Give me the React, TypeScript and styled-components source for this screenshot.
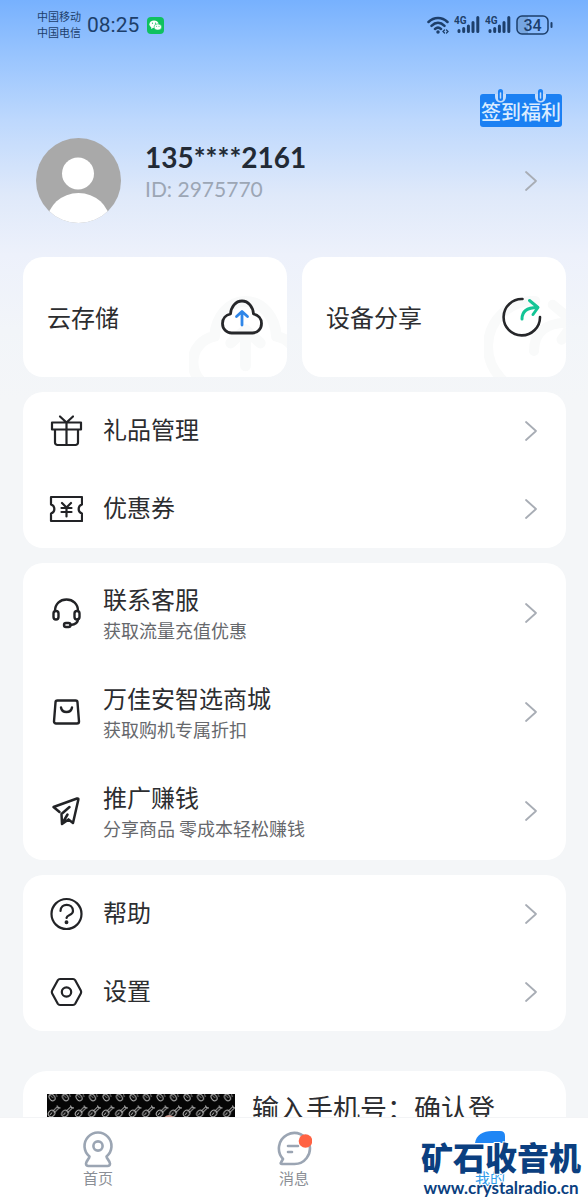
import React from 'react';
import styled, { createGlobalStyle } from 'styled-components';

const GlobalStyle = createGlobalStyle`
  * { box-sizing: border-box; }
  body { margin: 0; background: #f4f6f8; }
  button { border: 0; padding: 0; background: none; font: inherit; color: inherit; text-align: left; cursor: pointer; }
  a { color: inherit; text-decoration: none; }
  svg { display: block; flex: none; }
`;

const Screen = styled.div`
  height: 100vh;
  display: flex;
  flex-direction: column;
  overflow: hidden;
  font-family: "Noto Sans CJK SC", sans-serif;
  color: #2c2d30;
  background: linear-gradient(180deg, #77b1fe 0, #98c4fe 55px, #bdd8fd 120px, #dfe9fa 195px, #edf1fb 255px, #f2f5f9 330px, #f4f6f8 400px);
`;

const StatusBar = styled.header`
  flex: none;
  display: flex;
  align-items: center;
  height: 50px;
  padding: 0 35px 0 37px;
  color: #1d3f6b;
`;

const Carriers = styled.div`
  padding-bottom: 2px;
  font-size: 11px;
  line-height: 16px;
`;

const Clock = styled.time`
  margin: 0 8px 0 6px;
  font: 21px/24px Roboto, sans-serif;
`;

const StatusIcons = styled.div`
  display: flex;
  align-items: center;
  gap: 5px;
  margin-left: auto;
`;

const Content = styled.main`
  flex: 1;
  min-height: 0;
  overflow: hidden;
  display: flex;
  flex-direction: column;
  gap: 15px;
  padding: 0 22px 0 23px;
`;

const Profile = styled.section`
  flex: none;
  display: flex;
  flex-direction: column;
  gap: 11px;
  padding-top: 44px;
  margin-bottom: 19px;
`;

const CheckIn = styled.button`
  position: relative;
  align-self: flex-end;
  margin-right: 4px;
  width: 82px;
  height: 33px;
  border-radius: 3px;
  background: #1b80f3;
  color: #d9ebff;
  font-size: 20px;
  font-weight: 500;
  line-height: 36px;
  text-align: center;
  white-space: nowrap;
`;

const Rings = styled.svg`
  position: absolute;
  left: 0;
  top: -5px;
`;

const UserRow = styled.button`
  display: flex;
  align-items: center;
  width: 100%;
  padding: 0 28px 0 13px;
`;

const UserText = styled.span`
  display: flex;
  flex-direction: column;
  flex: 1;
  margin: 0 0 18px 24px;
  font-family: Lato, sans-serif;
`;

const Phone = styled.span`
  color: #222a35;
  font-size: 28px;
  font-weight: 700;
  line-height: 34px;
`;

const UserId = styled.span`
  color: #9ca6b5;
  font-size: 21px;
  line-height: 30px;
`;

const Tiles = styled.section`
  flex: none;
  display: grid;
  grid-template-columns: 1fr 1fr;
  gap: 15px;
`;

const Tile = styled.button`
  position: relative;
  overflow: hidden;
  display: flex;
  align-items: center;
  justify-content: space-between;
  height: 120px;
  padding: 0 24px;
  border-radius: 20px;
  background: #fff;
  font-size: 24px;
  line-height: 32px;
`;

const Ghost = styled.span<{ $right: number }>`
  position: absolute;
  top: 39px;
  right: ${(p) => p.$right}px;
`;

const TileIcon = styled.span`
  position: relative;
`;

const Card = styled.ul`
  flex: none;
  list-style: none;
  margin: 0;
  padding: 0;
  border-radius: 20px;
  background: #fff;
`;

const Row = styled.button<{ $tall?: boolean }>`
  display: flex;
  align-items: center;
  gap: 20px;
  width: 100%;
  height: ${(p) => (p.$tall ? 99 : 78)}px;
  padding: 0 28px 0 26px;
`;

const RowText = styled.span`
  flex: 1;
  display: flex;
  flex-direction: column;
`;

const RowTitle = styled.span`
  padding-bottom: 4px;
  font-size: 24px;
  line-height: 30px;
`;

const RowNote = styled.span`
  color: #66686c;
  font-size: 18px;
  line-height: 24px;
`;

const Promo = styled.article`
  flex: none;
  display: flex;
  gap: 17px;
  margin-top: 25px;
  padding: 23px 24px;
  border-radius: 24px;
  background: #fff;
`;

const PromoText = styled.p`
  flex: 1;
  margin: 0;
  font-size: 27px;
  line-height: 28px;
`;

const TabBar = styled.nav`
  position: relative;
  flex: none;
  display: grid;
  grid-template-columns: repeat(3, 1fr);
  height: 83px;
  background: #fff;
  border-top: 1px solid #f3f4f6;
`;

const Tab = styled.a<{ $active?: boolean }>`
  display: flex;
  flex-direction: column;
  align-items: center;
  padding-top: 12px;
  color: ${(p) => (p.$active ? '#2e9bea' : '#8b8f96')};
  font-size: 15px;
  line-height: 20px;
`;

const SiteMark = styled.div`
  position: absolute;
  right: 7px;
  bottom: 1px;
  color: #0b3f80;
  text-align: center;
  white-space: nowrap;
  -webkit-text-stroke: 2px #fff;
  paint-order: stroke fill;
`;

const SiteName = styled.div`
  padding-bottom: 3px;
  font-size: 32px;
  font-weight: 900;
  line-height: 36px;
`;

const SiteUrl = styled.div`
  font: 700 17px/22px Lato, sans-serif;
`;

const Chevron = () => (
  <svg width="14" height="22" viewBox="0 0 14 22" fill="none" stroke="#a8adb5" strokeWidth="1.800" strokeLinecap="round" strokeLinejoin="round">
    <path d="M2 2l10 9-10 9" />
  </svg>
);

const Signal = () => (
  <svg width="26" height="20" viewBox="0 0 26 20" fill="none" stroke="#1d3f6b">
    <text x="0" y="9" fontFamily="Roboto, sans-serif" fontSize="10" fontWeight="700" fill="#1d3f6b" stroke="none">4G</text>
    <path d="M5 15.500v1M9.700 13.500v3M14.400 11v5.500M19 7.500v9M23.800 2.500v14" strokeWidth="3" strokeLinecap="round" />
  </svg>
);

const Cloud = ({ size = 42, ghost = false }: { size?: number; ghost?: boolean }) => (
  <svg width={size} height={(size * 36) / 42} viewBox="0 0 42 36" fill="none" strokeLinecap="round" strokeLinejoin="round">
    <path d="M10.500 34C5.500 34 1.500 30 1.500 24.500c0-5 3.500-8.500 8-9.500C10 8 14.500 2 21 2s11 6 11.500 13c4.500 1 8 4.500 8 9.500 0 5.500-4 9.500-9 9.500z" stroke={ghost ? '#f9fafa' : '#26272a'} strokeWidth={ghost ? 4 : 2.8} />
    <path d="M21 26V13M15.500 17.500L21 12.500l5.500 5" stroke={ghost ? '#f9fafa' : '#2f86e8'} strokeWidth={ghost ? 4 : 2.8} />
  </svg>
);

const Share = ({ size = 40, ghost = false }: { size?: number; ghost?: boolean }) => (
  <svg width={size} height={size} viewBox="0 0 40 40" fill="none" strokeLinecap="round" strokeLinejoin="round">
    <path d="M20.500 2A18.200 18.200 0 1 0 38 20" stroke={ghost ? '#f9fafa' : '#26272a'} strokeWidth={ghost ? 4 : 2.6} />
    <path d="M20 22c0-8 5-11.500 15-11.500M27.500 3.500l8.500 7-5 7" stroke={ghost ? '#f9fafa' : '#14c596'} strokeWidth={ghost ? 4 : 3} />
  </svg>
);

const Glyph = ({ children, width = 2.2 }: { children: React.ReactNode; width?: number }) => (
  <svg width="34" height="34" viewBox="0 0 34 34" fill="none" stroke="#222326" strokeWidth={width} strokeLinecap="round" strokeLinejoin="round">
    {children}
  </svg>
);

const icons = {
  gift: (
    <Glyph>
      <path d="M3 8.500h29v7H3zM6 15.500h23v13a2.500 2.500 0 0 1-2.500 2.500h-18A2.500 2.500 0 0 1 6 28.500zM17.500 8.500V31M17.500 8.500L11 2.500M17.500 8.500L24 2.500" />
    </Glyph>
  ),
  coupon: (
    <Glyph>
      <path strokeLinecap="butt" d="M2 5h31v7.500c-4.500 1.500-4.500 7.500 0 9V29H2v-7.500c4.500-1.500 4.500-7.500 0-9z" />
      <path d="M13 11l4.500 4.500L22 11M17.500 15.500V24.500M12.500 16h10M12.500 20h10" />
    </Glyph>
  ),
  support: (
    <Glyph width={2.4}>
      <path d="M6 15C6 8 11 3.500 17.500 3.500S29 8 29 15M29 23c0 4-2.500 5.500-7.500 6" />
      <rect x="4.500" y="15" width="5" height="8.500" rx="2.500" />
      <rect x="25.500" y="15" width="5" height="8.500" rx="2.500" />
      <rect x="15" y="27" width="6.500" height="4" rx="2" />
    </Glyph>
  ),
  bag: (
    <Glyph width={2.4}>
      <path d="M8.500 5.500h18a2 2 0 0 1 2 2l1.500 19a2 2 0 0 1-2 2H7a2 2 0 0 1-2-2l1.500-19a2 2 0 0 1 2-2zM12 12.500c1 6 10 6 11 0" />
    </Glyph>
  ),
  plane: (
    <Glyph width={2.5}>
      <path d="M10.500 18L4.500 13 28 4.500q1.800-.500 1.300 1.300L24 29l-4.500-3.500M19.500 25.500L13 30l-.500-10L20.500 13M13.500 29l5-8.500" />
    </Glyph>
  ),
  help: (
    <Glyph>
      <circle cx="17.500" cy="17" r="15" />
      <path d="M11.500 14c0-8.500 12.500-8 12.500 0 0 4.500-6 3.500-6.500 7" />
      <circle cx="17.500" cy="25.200" r="1.200" fill="#222326" strokeWidth="1.500" />
    </Glyph>
  ),
  settings: (
    <Glyph>
      <path d="M11 4h13q1.500 0 2.200 1.200l5.600 10.300q.800 1.500 0 3l-5.600 10.300Q25.500 30 24 30H11q-1.500 0-2.200-1.200L3.200 18.500q-.800-1.500 0-3L8.800 5.200Q9.500 4 11 4z" />
      <circle cx="17.500" cy="17" r="4.700" />
    </Glyph>
  ),
};

type Item = { icon: keyof typeof icons; title: string; note?: string };

const groups: Item[][] = [
  [
    { icon: 'gift', title: '礼品管理' },
    { icon: 'coupon', title: '优惠券' },
  ],
  [
    { icon: 'support', title: '联系客服', note: '获取流量充值优惠' },
    { icon: 'bag', title: '万佳安智选商城', note: '获取购机专属折扣' },
    { icon: 'plane', title: '推广赚钱', note: '分享商品 零成本轻松赚钱' },
  ],
  [
    { icon: 'help', title: '帮助' },
    { icon: 'settings', title: '设置' },
  ],
];

export default function App() {
  return (
    <Screen>
      <GlobalStyle />
      <StatusBar>
        <Carriers>
          <div>中国移动</div>
          <div>中国电信</div>
        </Carriers>
        <Clock>08:25</Clock>
        <svg width="17" height="17" viewBox="0 0 17 17">
          <rect width="17" height="17" rx="4" fill="#0fc15f" />
          <ellipse cx="7" cy="7.200" rx="4.600" ry="3.800" fill="#fff" />
          <path d="M4.500 9.500L4 12l2.500-1.300z" fill="#fff" />
          <ellipse cx="10.800" cy="10" rx="3.800" ry="3.100" fill="#fff" stroke="#0fc15f" strokeWidth=".6" />
          <g fill="#0fc15f">
            <circle cx="5.500" cy="6.200" r=".6" />
            <circle cx="8.500" cy="6.200" r=".6" />
            <circle cx="9.600" cy="9.300" r=".5" />
            <circle cx="12" cy="9.300" r=".5" />
          </g>
        </svg>
        <StatusIcons>
          <svg width="22" height="18" viewBox="0 0 22 18" fill="none" stroke="#1d3f6b" strokeWidth="2.500" strokeLinecap="round">
            <path d="M1.500 6c5.500-5.500 13.500-5.500 19 0M4.500 9.800c4-4 9-4 13 0M8 13c2-1.800 4-1.800 6 0" />
            <circle cx="11" cy="16" r="1" fill="#1d3f6b" strokeWidth="1.500" />
            <path d="M17.500 14l-1.500 1.500 1.500 1.500M19.500 14l1.500 1.500-1.500 1.500" strokeWidth="1.300" />
          </svg>
          <Signal />
          <Signal />
          <svg width="37" height="20" viewBox="0 0 37 20">
            <path d="M6 1h6v18H6a5 5 0 0 1-5-5V6a5 5 0 0 1 5-5z" fill="#6f9cd3" opacity=".7" />
            <rect x="1" y="1" width="31" height="18" rx="5" fill="none" stroke="#1d3f6b" strokeWidth="1.500" />
            <path d="M35.500 8v4" stroke="#1d3f6b" strokeWidth="2" strokeLinecap="round" />
            <text x="16.500" y="15.500" textAnchor="middle" fontFamily="Roboto, sans-serif" fontSize="16" fontWeight="500" fill="#1d3f6b">34</text>
          </svg>
        </StatusIcons>
      </StatusBar>

      <Content>
        <Profile>
          <CheckIn>
            <Rings width="82" height="14" viewBox="0 0 82 14" fill="#1b80f3">
              <path d="M15 5h11v3a5.500 5.500 0 0 1-11 0zM55 5h11v3a5.500 5.500 0 0 1-11 0z" fill="#c4dcfb" />
              <rect x="18" y="0" width="5" height="12" rx="2.500" />
              <rect x="58" y="0" width="5" height="12" rx="2.500" />
              <path d="M20.500 4v5M60.500 4v5" stroke="#c4dcfb" strokeWidth="1.500" strokeLinecap="round" />
            </Rings>
            签到福利
          </CheckIn>
          <UserRow>
            <svg width="85" height="85" viewBox="0 0 85 85">
              <clipPath id="avatar">
                <circle cx="42.500" cy="42.500" r="42.500" />
              </clipPath>
              <g clipPath="url(#avatar)">
                <rect width="85" height="85" fill="#a9a9a9" />
                <circle cx="42" cy="35.500" r="16" fill="#fff" />
                <ellipse cx="42.500" cy="83" rx="31" ry="28" fill="#fff" />
              </g>
            </svg>
            <UserText>
              <Phone>135****2161</Phone>
              <UserId>ID: 2975770</UserId>
            </UserText>
            <Chevron />
          </UserRow>
        </Profile>

        <Tiles>
          <Tile>
            <Ghost $right={-15}><Cloud size={113} ghost /></Ghost>
            <span>云存储</span>
            <TileIcon><Cloud /></TileIcon>
          </Tile>
          <Tile>
            <Ghost $right={-18}><Share size={100} ghost /></Ghost>
            <span>设备分享</span>
            <TileIcon><Share /></TileIcon>
          </Tile>
        </Tiles>

        {groups.map((items) => (
          <Card key={items[0].title}>
            {items.map((item) => (
              <li key={item.title}>
                <Row $tall={!!item.note}>
                  {icons[item.icon]}
                  <RowText>
                    <RowTitle>{item.title}</RowTitle>
                    {item.note && <RowNote>{item.note}</RowNote>}
                  </RowText>
                  <Chevron />
                </Row>
              </li>
            ))}
          </Card>
        ))}

        <Promo>
          <svg width="188" height="188" viewBox="0 0 188 188">
            <pattern id="tools" width="13.500" height="28" patternUnits="userSpaceOnUse">
              <g fill="none" stroke="#b5b5b5" strokeWidth="1">
                <ellipse cx="5" cy="3.500" rx="2.600" ry="3.600" transform="rotate(-35 5 3.500)" />
                <path d="M2 0l4 4M9 0l1 3" stroke="#777" />
                <ellipse cx="4.500" cy="19.500" rx="3" ry="3.500" transform="rotate(40 4.500 19.500)" />
                <path d="M5.500 17.500l5-5M7 19l5-5M10 11.500l1 2 2.500.500M3 21l2-2.500" />
              </g>
            </pattern>
            <rect width="188" height="188" fill="#050505" />
            <rect width="188" height="188" fill="url(#tools)" />
            <circle cx="122" cy="27" r="6" fill="#c99a90" />
          </svg>
          <PromoText>输入手机号：确认登</PromoText>
        </Promo>
      </Content>

      <TabBar>
        <Tab href="#home">
          <svg width="36" height="38" viewBox="0 0 36 38" fill="none" stroke="#9ba5b3" strokeWidth="2.600" strokeLinejoin="round">
            <path d="M9.500 26.500A13.500 13.500 0 1 1 26.500 26.500c0 2 3.500 4.500 3.500 7q0 2.500-2.500 2.500h-19Q6 36 6 33.500c0-2.500 3.500-5 3.500-7z" />
            <circle cx="18" cy="16" r="4.600" />
          </svg>
          首页
        </Tab>
        <Tab href="#messages">
          <svg width="36" height="38" viewBox="0 0 36 38" fill="none" stroke="#9ba5b3" strokeWidth="2.600" strokeLinecap="round" strokeLinejoin="round">
            <path d="M18.500 34H6q-2 0-1-1.500l2-3.500A15.500 15.500 0 1 1 18.500 34z" />
            <path d="M12 16h10M12 22h4" />
            <circle cx="29.500" cy="11" r="6.800" fill="#ff6243" stroke="none" />
          </svg>
          消息
        </Tab>
        <Tab href="#me" $active>
          <svg width="36" height="38" viewBox="0 0 36 38" fill="#1f86f5">
            <path d="M3 13C4 5 11 1 20 1h8q5 0 5 5v7z" />
          </svg>
          我的
        </Tab>
        <SiteMark>
          <SiteName>矿石收音机</SiteName>
          <SiteUrl>www.crystalradio.cn</SiteUrl>
        </SiteMark>
      </TabBar>
    </Screen>
  );
}
